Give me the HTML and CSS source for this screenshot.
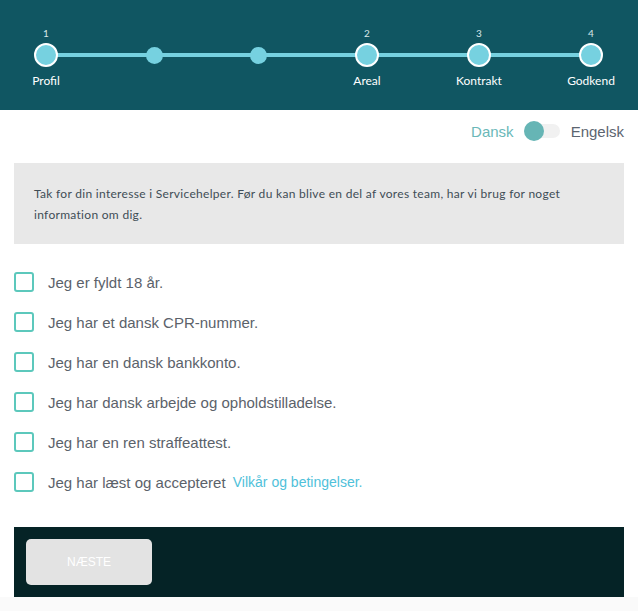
FILE: index.html
```html
<!DOCTYPE html>
<html lang="da">
<head>
  <meta charset="UTF-8">
  <title>Servicehelper – Profil</title>
  <link rel="stylesheet" href="styles.css">
</head>
<body>
  <header class="steps-bar">
    <div class="steps">
      <div class="step">
        <span class="step-num">1</span>
        <span class="step-dot"><span class="dot big"></span></span>
        <span class="step-label">Profil</span>
      </div>
      <div class="step">
        <span class="step-num"></span>
        <span class="step-dot"><span class="dot small"></span></span>
        <span class="step-label"></span>
      </div>
      <div class="step">
        <span class="step-num"></span>
        <span class="step-dot"><span class="dot small"></span></span>
        <span class="step-label"></span>
      </div>
      <div class="step">
        <span class="step-num">2</span>
        <span class="step-dot"><span class="dot big"></span></span>
        <span class="step-label">Areal</span>
      </div>
      <div class="step">
        <span class="step-num">3</span>
        <span class="step-dot"><span class="dot big"></span></span>
        <span class="step-label">Kontrakt</span>
      </div>
      <div class="step">
        <span class="step-num">4</span>
        <span class="step-dot"><span class="dot big"></span></span>
        <span class="step-label">Godkend</span>
      </div>
    </div>
  </header>

  <main class="page">
    <div class="lang">
      <span class="lang-active">Dansk</span>
      <span class="toggle"><span class="knob"></span></span>
      <span class="lang-other">Engelsk</span>
    </div>

    <div class="intro">
      Tak for din interesse i Servicehelper. Før du kan blive en del af vores team, har vi brug for noget information om dig.
    </div>

    <ul class="checklist">
      <li><span class="box"></span>Jeg er fyldt 18 år.</li>
      <li><span class="box"></span>Jeg har et dansk CPR-nummer.</li>
      <li><span class="box"></span>Jeg har en dansk bankkonto.</li>
      <li><span class="box"></span>Jeg har dansk arbejde og opholdstilladelse.</li>
      <li><span class="box"></span>Jeg har en ren straffeattest.</li>
      <li><span class="box"></span>Jeg har læst og accepteret&nbsp;<a href="#" class="terms">Vilkår og betingelser.</a></li>
    </ul>

    <div class="footer-bar">
      <button class="next-btn">NÆSTE</button>
    </div>
  </main>
</body>
</html>
```

FILE: styles.css
```css
body {
  margin: 0;
  background: #fafafa;
  font-family: "Liberation Sans", Arial, sans-serif;
}
.steps-bar {
  height: 110px;
  box-sizing: border-box;
  padding: 26px 16px 0;
  background: #105662;
}
.steps {
  position: relative;
  display: flex;
}
.steps::before {
  content: "";
  position: absolute;
  left: 30px;
  right: 30px;
  top: 27px;
  height: 4px;
  background: #76d1e0;
}
.step {
  position: relative;
  width: 60px;
  display: flex;
  flex-direction: column;
  align-items: center;
  font-family: Lato, sans-serif;
  color: #fff;
}
/* spacing between the steps is not even in the design */
.step:nth-child(2) { margin-left: 48px; }
.step:nth-child(3) { margin-left: 44px; }
.step:nth-child(4) { margin-left: 49px; }
.step:nth-child(5) { margin-left: 52px; }
.step:nth-child(6) { margin-left: 52px; }
.step-num {
  height: 14px;
  line-height: 14px;
  font-size: 10px;
  color: #d8e6e8;
  margin-bottom: 3px;
}
.step-dot {
  width: 24px;
  height: 24px;
  display: flex;
  align-items: center;
  justify-content: center;
}
.dot {
  border-radius: 50%;
  background: #76d1e0;
  box-sizing: border-box;
}
.dot.big {
  width: 24px;
  height: 24px;
  border: 2px solid #fff;
}
.dot.small {
  width: 17px;
  height: 17px;
}
.step-label {
  margin-top: 7px;
  height: 14px;
  line-height: 14px;
  font-size: 12px;
}
.page {
  background: #fff;
  padding: 0 14px;
}
.lang {
  height: 42px;
  display: flex;
  justify-content: flex-end;
  align-items: center;
  font-size: 15px;
}
.lang-active {
  color: #6ab8b8;
}
.toggle {
  position: relative;
  width: 36px;
  height: 14px;
  margin: 0 11px 0 10px;
  border-radius: 7px;
  background: #f1f1f1;
}
.knob {
  position: absolute;
  left: 0;
  top: -3px;
  width: 20px;
  height: 20px;
  border-radius: 50%;
  background: #66b5b5;
}
.lang-other {
  color: #5c6570;
}
.intro {
  margin-top: 11px;
  padding: 20px 20px 19px;
  background: #e8e8e8;
  font-family: Lato, sans-serif;
  font-size: 12px;
  letter-spacing: 0.3px;
  line-height: 21px;
  color: #3f4d56;
}
.checklist {
  list-style: none;
  margin: 18px 0 0;
  padding: 0;
}
.checklist li {
  height: 40px;
  display: flex;
  align-items: center;
  font-size: 15px;
  color: #5b626a;
}
.box {
  width: 20px;
  height: 20px;
  box-sizing: border-box;
  margin-right: 14px;
  border: 2px solid #5cc8bc;
  border-radius: 3px;
}
.terms {
  margin-left: 3px;
  color: #4fc1da;
  text-decoration: none;
  font-size: 14px;
}
.footer-bar {
  margin-top: 25px;
  padding: 12px;
  background: #052326;
}
.next-btn {
  width: 126px;
  height: 46px;
  border: none;
  border-radius: 5px;
  background: #e3e3e3;
  color: #fff;
  font-family: "Liberation Sans", Arial, sans-serif;
  font-size: 12px;
  cursor: pointer;
}
```
